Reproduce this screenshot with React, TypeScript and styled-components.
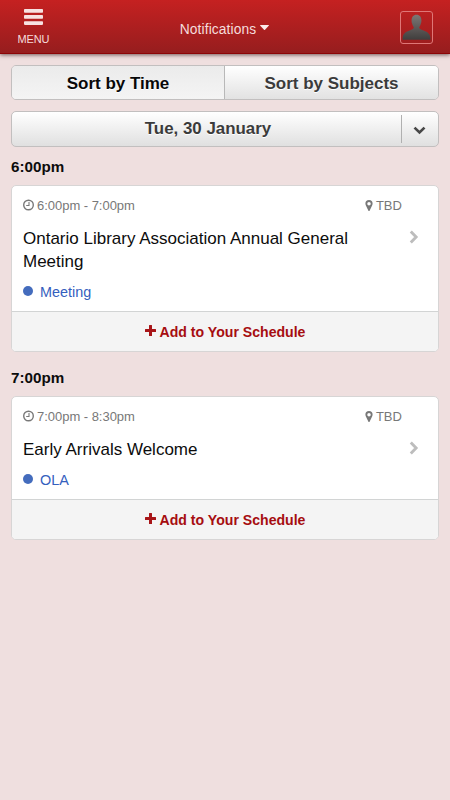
import React from "react";
import styled, { createGlobalStyle } from "styled-components";

const GlobalStyle = createGlobalStyle`
  * { box-sizing: border-box; }
  body {
    margin: 0;
    background: #efdfdf;
    font-family: "Liberation Sans", Arial, sans-serif;
    color: #0c0c0c;
  }
`;

const Page = styled.div`
  min-height: 800px;
  background: #efdfdf;
`;

const Header = styled.header`
  height: 54px;
  display: grid;
  grid-template-columns: 67px 1fr 68px;
  background: linear-gradient(#c52121, #961d1e);
  border-bottom: 1px solid #8c0507;
  box-shadow: 0 1px 4px rgba(60, 30, 30, 0.7);
  color: #f5dcdc;
`;

const MenuButton = styled.div`
  display: flex;
  flex-direction: column;
  align-items: center;
  padding-top: 9px;
  font-size: 11px;
  line-height: 13px;
  letter-spacing: -0.15px;

  svg { display: block; margin-bottom: 8px; }
`;

const HeaderTitle = styled.div`
  display: flex;
  justify-content: center;
  padding-top: 21px;
  font-size: 13.8px;
  line-height: 17px;
  letter-spacing: 0.1px;

  svg { display: block; margin: 4px 0 0 4px; }
`;

const Avatar = styled.div`
  width: 33px;
  height: 33px;
  margin: 11px 0 0 18px;
  border: 1px solid #df7777;
  border-radius: 3px;

  svg { display: block; }
`;

const Content = styled.main`
  padding: 11px 11px 0;
`;

const Segments = styled.div`
  display: flex;
  height: 35px;
  border: 1px solid #c2bfbf;
  border-radius: 5px;
  overflow: hidden;
`;

const Segment = styled.div<{ $active?: boolean }>`
  flex: ${(p) => (p.$active ? "0 0 213px" : "1")};
  border-right: ${(p) => (p.$active ? "1px solid #b8b8b8" : "none")};
  background: ${(p) =>
    p.$active ? "linear-gradient(#ebebeb, #f4f4f4)" : "linear-gradient(#ffffff, #e2e2e2)"};
  color: ${(p) => (p.$active ? "#080808" : "#3b3b3b")};
  font-size: 17px;
  font-weight: bold;
  line-height: 35px;
  text-align: center;
  text-shadow: 0 1px 0 #fff;
`;

const DateBar = styled.div`
  display: flex;
  align-items: center;
  height: 36px;
  margin-top: 11px;
  border: 1px solid #c2bfbf;
  border-radius: 5px;
  background: linear-gradient(#ffffff, #e0e0e0);
  color: #3b3b3b;
`;

const DateLabel = styled.div`
  flex: 1;
  padding-left: 3px;
  font-size: 16.9px;
  font-weight: bold;
  line-height: 36px;
  text-align: center;
  text-shadow: 0 1px 0 #fff;
`;

const DateToggle = styled.div`
  display: flex;
  align-items: center;
  justify-content: center;
  width: 37px;
  height: 28px;
  border-left: 1px solid #b0b0b0;

  svg { margin: 2px 1px 0 0; }
`;

const TimeHeading = styled.h2<{ $later?: boolean }>`
  margin: ${(p) => (p.$later ? "17px" : "11px")} 0 0;
  height: 27px;
  font-size: 15.2px;
  line-height: 18px;
`;

const Card = styled.section`
  border: 1px solid #d7d5d5;
  border-radius: 5px;
  background: #fff;
  overflow: hidden;
`;

const CardBody = styled.div`
  padding: 11px 11px 10px;
`;

const Meta = styled.div`
  display: flex;
  align-items: center;
  height: 18px;
  color: #787878;
  font-size: 13px;
  line-height: 18px;

  svg { flex: none; display: block; margin-top: -1px; }
`;

const MetaTime = styled.span`
  flex: 1;
  padding-left: 3px;
  letter-spacing: -0.03px;
`;

const MetaPlace = styled.span`
  width: 54px;
  padding-left: 3px;
  letter-spacing: -0.1px;
`;

const TitleRow = styled.div`
  display: flex;
  justify-content: space-between;
  margin-top: 12px;

  svg { flex: none; display: block; margin: 3px 8px 0 0; }
`;

const Title = styled.div`
  width: 345px;
  font-size: 17px;
  line-height: 23px;
`;

const Tag = styled.div`
  display: flex;
  align-items: center;
  height: 18px;
  margin-top: 10px;
  color: #3460be;
  font-size: 14.4px;
  line-height: 18px;
`;

const Dot = styled.span`
  width: 10px;
  height: 10px;
  margin: -2px 7px 0 0;
  border-radius: 50%;
  background: #446cbd;
`;

const AddButton = styled.div`
  display: flex;
  justify-content: center;
  height: 40px;
  border-top: 1px solid #d2d4d4;
  background: #f4f4f4;
  color: #a60d10;
  font-size: 14.1px;
  font-weight: bold;
  line-height: 41px;

  svg { display: block; margin: 13px 4px 0 0; }
`;

const ClockIcon = () => (
  <svg width="11" height="13" viewBox="0 0 11 13" fill="none" stroke="#787878">
    <circle cx="5.5" cy="6" r="4.8" strokeWidth="1.4" />
    <path d="M6 3v3.5H3.2" strokeWidth="1.1" />
  </svg>
);

const PinIcon = () => (
  <svg width="8" height="14" viewBox="0 0 8 14" fill="#787878">
    <path
      fillRule="evenodd"
      d="M4 1a3.6 3.6 0 0 1 3.6 3.6c0 .7-.2 1.2-.5 1.8L4.6 11.7q-.6.8-1.2 0L.9 6.4C.6 5.8.4 5.3.4 4.6A3.6 3.6 0 0 1 4 1Zm0 1.9a1.75 1.75 0 1 0 0 3.5 1.75 1.75 0 0 0 0-3.5Z"
    />
  </svg>
);

const ChevronRight = () => (
  <svg width="10" height="14" viewBox="0 0 10 14" fill="none" stroke="#bdbdbd" strokeWidth="2.9">
    <path d="M1.8 1.6 7.1 7l-5.3 5.4" />
  </svg>
);

const PlusIcon = () => (
  <svg width="11" height="11" viewBox="0 0 11 11" fill="#a81518">
    <path d="M4.5 0h2q.5 0 .5.5V4h3.5q.5 0 .5.5v2q0 .5-.5.5H7v3.5q0 .5-.5.5h-2q-.5 0-.5-.5V7H.5Q0 7 0 6.5v-2Q0 4 .5 4H4V.5q0-.5.5-.5Z" />
  </svg>
);

interface Session {
  time: string;
  range: string;
  title: string;
  tag: string;
}

const sessions: Session[] = [
  {
    time: "6:00pm",
    range: "6:00pm - 7:00pm",
    title: "Ontario Library Association Annual General Meeting",
    tag: "Meeting",
  },
  { time: "7:00pm", range: "7:00pm - 8:30pm", title: "Early Arrivals Welcome", tag: "OLA" },
];

const SessionCard = ({ session }: { session: Session }) => (
  <Card>
    <CardBody>
      <Meta>
        <ClockIcon />
        <MetaTime>{session.range}</MetaTime>
        <PinIcon />
        <MetaPlace>TBD</MetaPlace>
      </Meta>
      <TitleRow>
        <Title>{session.title}</Title>
        <ChevronRight />
      </TitleRow>
      <Tag>
        <Dot />
        {session.tag}
      </Tag>
    </CardBody>
    <AddButton>
      <PlusIcon />
      Add to Your Schedule
    </AddButton>
  </Card>
);

export default function App() {
  return (
    <Page>
      <GlobalStyle />
      <Header>
        <MenuButton>
          <svg width="19" height="16" viewBox="0 0 19 16" fill="#f7e2e2">
            <rect width="19" height="3.7" rx="0.8" />
            <rect y="6.1" width="19" height="3.7" rx="0.8" />
            <rect y="12.2" width="19" height="3.7" rx="0.8" />
          </svg>
          MENU
        </MenuButton>
        <HeaderTitle>
          Notifications
          <svg width="9" height="6" viewBox="0 0 9 6" fill="#fbeaea">
            <path d="M.5 0h8q.7.1.2.7L5 4.8q-.5.5-1 0L.3.7Q-.2.1.5 0Z" />
          </svg>
        </HeaderTitle>
        <Avatar>
          <svg width="31" height="31" viewBox="0 0 31 31">
            <defs>
              <linearGradient id="person" x1="0" y1="0" x2="0" y2="1">
                <stop offset="0" stopColor="#7d7876" />
                <stop offset="1" stopColor="#403e3d" />
              </linearGradient>
            </defs>
            <path
              fill="url(#person)"
              d="M15.5 2.7c3.2 0 5 2.3 4.9 5.8 0 1.2 0 2-.5 3-.3 1.5-1 2.8-1.7 3.6-.1 1.6.8 2.2 2.8 2.8 4.6 1.5 7.7 3.2 8.2 6.7.2 1.4.3 2.5.2 3.1H1.6c-.1-.6 0-1.7.2-3.1.5-3.5 3.6-5.2 8.2-6.7 2-.6 2.9-1.2 2.8-2.8-.7-.8-1.4-2.1-1.7-3.6-.5-1-.5-1.8-.5-3 0-3.5 1.7-5.8 4.9-5.8Z"
            />
          </svg>
        </Avatar>
      </Header>
      <Content>
        <Segments>
          <Segment $active>Sort by Time</Segment>
          <Segment>Sort by Subjects</Segment>
        </Segments>
        <DateBar>
          <DateLabel>Tue, 30 January</DateLabel>
          <DateToggle>
            <svg width="13" height="9" viewBox="0 0 13 9" fill="none" stroke="#484848" strokeWidth="2.7">
              <path d="m1.5 1.6 5 4.8 5-4.8" />
            </svg>
          </DateToggle>
        </DateBar>
        {sessions.map((session, index) => (
          <React.Fragment key={session.time}>
            <TimeHeading $later={index > 0}>{session.time}</TimeHeading>
            <SessionCard session={session} />
          </React.Fragment>
        ))}
      </Content>
    </Page>
  );
}
